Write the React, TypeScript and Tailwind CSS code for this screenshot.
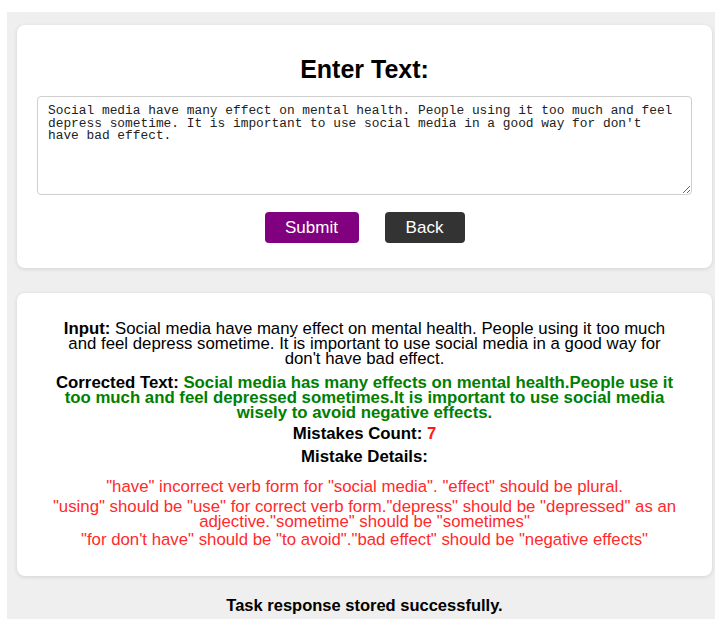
import React, { useState } from 'react';

const inputText =
  "Social media have many effect on mental health. People using it too much and feel depress sometime. It is important to use social media in a good way for don't have bad effect.";

const correctedText =
  'Social media has many effects on mental health.People use it too much and feel depressed sometimes.It is important to use social media wisely to avoid negative effects.';

const mistakeDetails = [
  '"have" incorrect verb form for "social media". "effect" should be plural.',
  '"using" should be "use" for correct verb form."depress" should be "depressed" as an adjective."sometime" should be "sometimes"',
  '"for don\'t have" should be "to avoid"."bad effect" should be "negative effects"',
];

export default function App() {
  const [text, setText] = useState(inputText);

  return (
    <div className="min-h-screen bg-white pt-[12px] pl-[7px] font-['Liberation_Sans',Arial,sans-serif] text-black">
      <div className="bg-[#efefef] pt-[13px] pl-[10px] pr-[3px] h-[607px]">
        {/* Input card */}
        <div className="bg-white rounded-lg shadow-[0_1px_4px_rgba(0,0,0,0.12)] px-[20px] pt-[31px] pb-[25px] flex flex-col items-center">
          <h2 className="text-[25px] leading-[26px] font-bold">Enter Text:</h2>
          <textarea
            value={text}
            onChange={(e) => setText(e.target.value)}
            spellCheck={false}
            className="mt-[14px] w-full h-[99px] border border-[#cfcfcf] rounded pl-[10px] pr-[18px] py-[8px] font-['Liberation_Mono',monospace] text-[12.85px] leading-[12.5px] text-[#222] resize-y focus:outline-none"
          />
          <div className="mt-[17px] flex gap-[26px]">
            <button className="w-[94px] h-[31px] rounded bg-[#800080] text-white text-[17px]">Submit</button>
            <button className="w-[80px] h-[31px] rounded bg-[#333333] text-white text-[17px]">Back</button>
          </div>
        </div>

        {/* Result card */}
        <div className="mt-[25px] bg-white rounded-lg shadow-[0_1px_4px_rgba(0,0,0,0.12)] px-[34px] pt-[28px] pb-[29px] text-center text-[16.8px] leading-[15px]">
          <p>
            <span className="font-bold">Input:</span> {inputText}
          </p>
          <p className="mt-[9px] font-bold">
            Corrected Text: <span className="text-[#008000]">{correctedText}</span>
          </p>
          <p className="mt-[6px] font-bold">
            Mistakes Count: <span className="text-[#ff1a1a]">7</span>
          </p>
          <p className="mt-[8px] font-bold">Mistake Details:</p>
          <ul className="mt-[15px] text-[#ff2a2a]">
            <li>{mistakeDetails[0]}</li>
            <li className="mt-[5px]">{mistakeDetails[1]}</li>
            <li className="mt-[3px]">{mistakeDetails[2]}</li>
          </ul>
        </div>

        <p className="mt-[17px] text-center text-[16.5px] font-bold">Task response stored successfully.</p>
      </div>
    </div>
  );
}
